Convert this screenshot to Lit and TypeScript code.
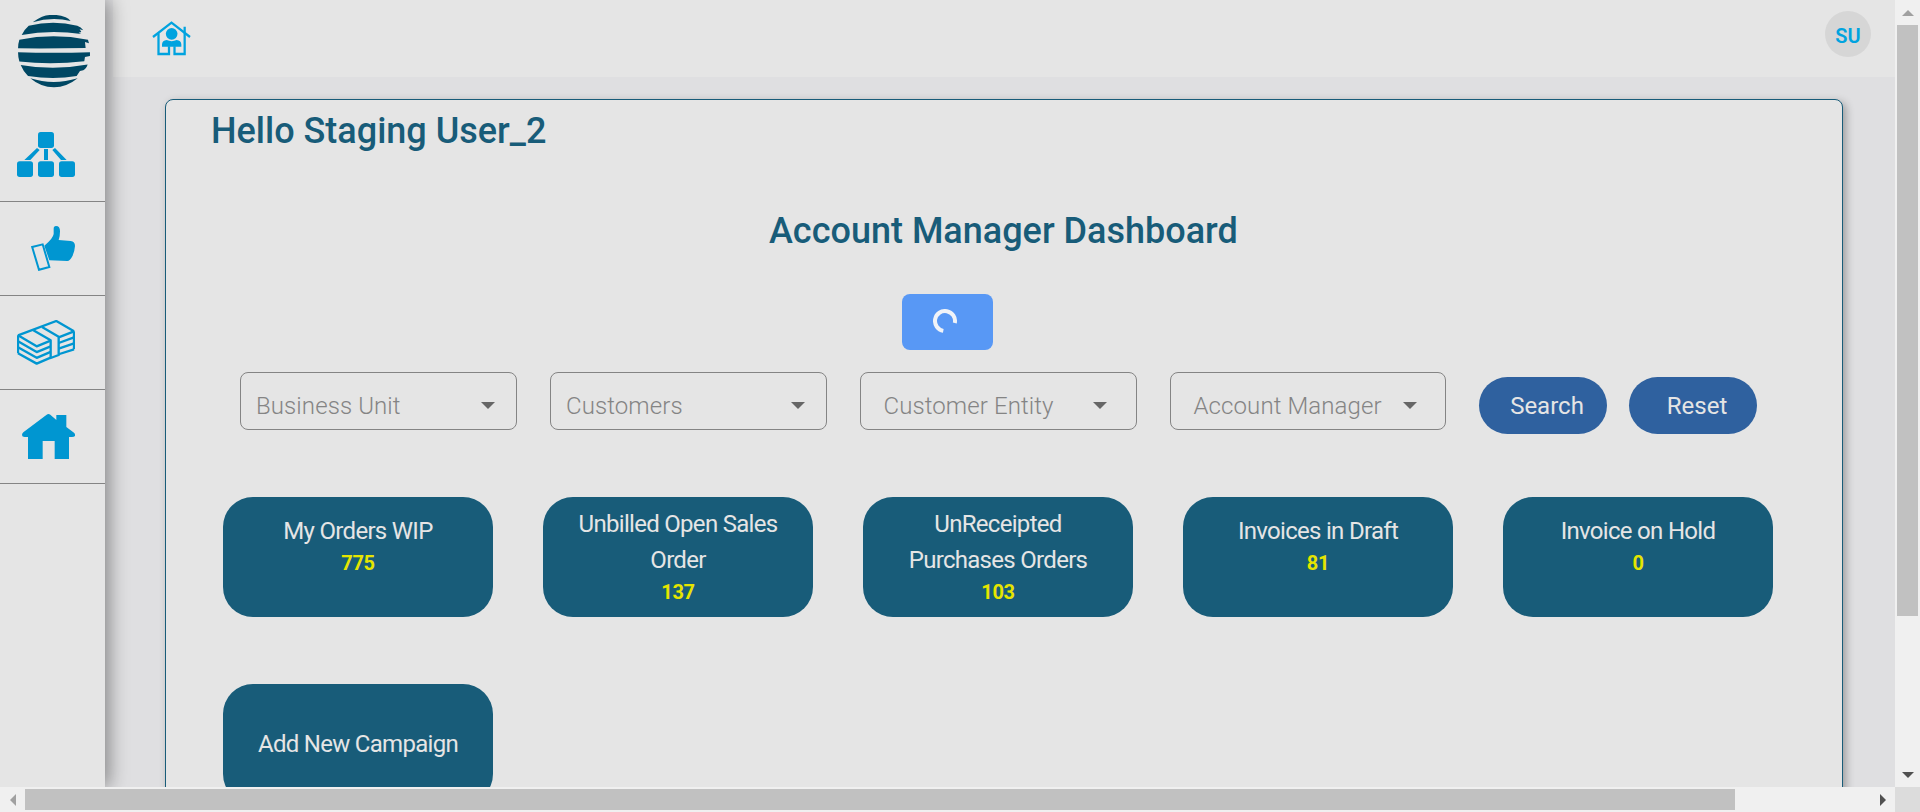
import { LitElement, html, css, svg } from "lit";
import { customElement } from "lit/decorators.js";

const logo = html`<svg class="logo" viewBox="54 44 216 218">
  <path d="M98 66Q110 56 126 49Q162 37 197 51Q206 55 212 62Q155 48 98 66Z" />
  <path d="M65 104Q72 88 86 76Q160 58 232 76Q243 80 250 90L239 87L244 95L236 97L244 101Q150 88 65 104Z" />
  <path d="M58 118Q160 98 264 118L267 129L255 125L257 143Q150 145 54 144Q54 130 58 118Z" />
  <path d="M54 156Q160 159 270 156L270 167L255 170L253 183Q155 194 58 184Q54 170 54 156Z" />
  <path d="M62 194Q160 212 263 193Q259 206 250 210L240 212L230 227Q160 240 84 227Q69 212 62 194Z" />
  <path d="M91 234Q160 256 233 234Q200 261 162 261Q122 261 91 234Z" />
</svg>`;

const userHome = html`<svg class="user-home" viewBox="456 64 117 105">
  <g fill="none" stroke="#00a3df" stroke-width="6.800">
    <path d="M459 112L514.500 69L570 112" />
    <path d="M475.500 101V163H507V140M523.500 140V163H554V81" />
  </g>
  <circle cx="515" cy="102.500" r="17.500" fill="#00a3df" />
  <path d="M486 141V134Q487 122 500 121Q515 128 530 121Q543 122 544 134V141Z" fill="#00a3df" />
</svg>`;

const offsets = [0, 18, 36, 54];

const navIcons = [
  html`<svg class="icon" viewBox="0 0 174 135">
    <rect x="63" y="0" width="48" height="48" rx="8" />
    <rect x="0" y="88" width="48" height="47" rx="8" />
    <rect x="63" y="88" width="48" height="47" rx="8" />
    <rect x="126" y="88" width="48" height="47" rx="8" />
    <path d="M60 48L68 54L40 84H22ZM114 48L106 54L132 84H149ZM81 51H93V84H81Z" />
  </svg>`,
  html`<svg class="icon" viewBox="51 108 174 135">
    <path d="M96.500 171L128 163L148 231L117 239.500Z" fill="none" stroke="#0096d1" stroke-width="6" />
    <path d="M133 167Q159 146 161 132V116Q161 108 168 108Q180 108 180 124Q180 140 176 150L212 153Q225 154 225 168Q224 184 217 199Q210 213 202 213L148 211Z" />
  </svg>`,
  html`<svg class="icon" viewBox="51 390 174 135">
    <g fill="none" stroke="#0096d1" stroke-width="7" stroke-linejoin="round">
      ${offsets.map(
        (d) => svg`<path d="M54 ${436 + d}L110 ${469 + d * 0.96}L152 ${452 + d * 0.94}M176 ${442 + d * 0.94}L222 ${424 + d}" />`
      )}
      <path d="M54 436L169 393L222 424M54 436V490M222 424V478" />
      <path d="M100 421L152 451V504L176 495V440L126 411" />
    </g>
  </svg>`,
  html`<svg class="icon" viewBox="51 672 174 135">
    <path d="M66 735Q66 730 70 727L140 674Q145 670 151 674L169 690V675H199V711L222 728Q226 732 225 738Q222 741 216 741H207V807H164V753H128V807H84V741H74Q66 741 66 735Z" />
  </svg>`,
];

const filters = [
  { label: "Business Unit", inset: false },
  { label: "Customers", inset: false },
  { label: "Customer Entity", inset: true },
  { label: "Account Manager", inset: true },
];

const cards = [
  { lines: ["My Orders WIP"], value: "775" },
  { lines: ["Unbilled Open Sales", "Order"], value: "137" },
  { lines: ["UnReceipted", "Purchases Orders"], value: "103" },
  { lines: ["Invoices in Draft"], value: "81" },
  { lines: ["Invoice on Hold"], value: "0" },
];

@customElement("app-root")
export class AppRoot extends LitElement {
  static styles = css`
    :host {
      display: grid;
      grid-template-columns: 1895px 25px;
      grid-template-rows: 787px 25px;
      width: 1920px;
      height: 812px;
      overflow: hidden;
      font-family: Roboto, "Liberation Sans", sans-serif;
    }
    * { box-sizing: border-box; }
    .page {
      display: flex;
      overflow: hidden;
      background: #dfdfe1;
    }
    .sidebar {
      position: relative;
      z-index: 1;
      flex: none;
      width: 105px;
      background: #e5e5e5;
      box-shadow: 4px 0 18px rgba(0, 0, 0, 0.4);
    }
    .brand { height: 108px; padding: 15px 0 0 18px; }
    svg { display: block; }
    .logo { width: 72px; height: 72.6px; fill: #004763; }
    .nav {
      height: 94px;
      padding: 24px 0 0 17px;
      border-bottom: 1px solid #848484;
    }
    .icon { width: 58px; height: 45px; fill: #0096d1; }
    .content { flex: 1; }
    .header {
      display: flex;
      justify-content: space-between;
      height: 77px;
      margin-left: 8px;
      padding: 11px 24px 0 39px;
      background: #e5e5e5;
    }
    .user-home { width: 39px; height: 35px; margin-top: 10.3px; }
    .avatar {
      width: 46px;
      height: 46px;
      border-radius: 50%;
      background: #d6d6d6;
      color: #00a3df;
      font-size: 20px;
      line-height: 51px;
      font-weight: 600;
      text-align: center;
    }
    .panel {
      width: 1678px;
      height: 900px;
      margin: 22px 0 0 60px;
      border: 1px solid #185c79;
      border-radius: 8px;
      background: #e5e5e5;
      box-shadow: 3px 3px 9px rgba(0, 0, 0, 0.3);
    }
    .greeting, .title {
      margin: 0;
      color: #185c79;
      font-size: 36px;
      line-height: 42px;
      font-weight: 500;
      white-space: nowrap;
    }
    .greeting { padding: 10px 0 0 45px; }
    .title { padding: 58px 0 0 603px; }
    .loading {
      display: flex;
      width: 91px;
      height: 56px;
      margin: 42px 0 0 736px;
      padding: 15px 0 0 31px;
      border-radius: 8px;
      background: #5898f5;
    }
    .filters { display: flex; margin: 22px 0 0 74px; }
    .select {
      display: flex;
      justify-content: space-between;
      align-items: center;
      width: 277px;
      height: 58px;
      margin-right: 33px;
      padding: 9px 21px 0 15px;
      border: 1px solid #848484;
      border-radius: 8px;
      color: #848484;
      font-size: 24px;
      font-weight: 300;
      letter-spacing: 0.1px;
      white-space: nowrap;
    }
    .select.inset { padding: 9px 29px 0 22.5px; }
    .select.last { width: 276px; padding-right: 28px; }
    .arrow { width: 14px; height: 7px; margin-bottom: 1px; fill: #666; }
    .button {
      width: 128px;
      height: 57px;
      margin: 5px 22px 0 0;
      border-radius: 28.5px;
      background: #2f619f;
      color: #e5e5e5;
      font-size: 24px;
      line-height: 59px;
      padding-left: 8px;
      text-align: center;
    }
    .cards {
      display: grid;
      grid-template-columns: repeat(5, 270px);
      gap: 67px 50px;
      margin: 63px 0 0 57px;
    }
    .card {
      display: flex;
      flex-direction: column;
      align-items: center;
      height: 120px;
      padding-top: 9px;
      border-radius: 30px;
      background: #185c79;
      color: #e5e5e5;
      font-size: 24px;
      line-height: 36px;
      letter-spacing: -0.7px;
      white-space: nowrap;
    }
    .card.short { padding-top: 16px; }
    .card.action { justify-content: center; padding: 0; }
    .value {
      color: #e5e500;
      font-size: 20px;
      line-height: 29px;
      font-weight: 700;
      letter-spacing: -0.3px;
    }
    .bar { display: flex; background: #f0f0f0; justify-content: space-between; }
    .vertical { flex-direction: column; padding: 0 2px; }
    .horizontal { padding: 2px 0; }
    .step { display: grid; place-items: center; width: 25px; height: 21px; }
    .vertical .step { width: 21px; height: 25px; }
    .v-thumb { height: 591px; margin-bottom: auto; background: #c1c1c1; }
    .h-thumb { width: 1710px; margin-right: auto; background: #c1c1c1; }
    .corner { background: #dcdcdc; }
  `;

  render() {
    return html`
      <div class="page">
        <nav class="sidebar">
          <div class="brand">${logo}</div>
          ${navIcons.map((icon) => html`<div class="nav">${icon}</div>`)}
        </nav>
        <div class="content">
          <header class="header">
            ${userHome}
            <div class="avatar">SU</div>
          </header>
          <main class="panel">
            <h1 class="greeting">Hello Staging User_2</h1>
            <h2 class="title">Account Manager Dashboard</h2>
            <div class="loading">
              <svg width="24" height="24" viewBox="0 0 24 24" fill="none">
                <path d="M21.800 14A10 10 0 1 0 10.300 21.860" stroke="#f0f3f8" stroke-width="4" />
              </svg>
            </div>
            <div class="filters">
              ${filters.map(
                (f, i) => html`<div class="select ${f.inset ? "inset" : ""} ${i === filters.length - 1 ? "last" : ""}">
                  <span>${f.label}</span>
                  <svg class="arrow" viewBox="0 0 14 7"><path d="M0 0H14L7 7Z" /></svg>
                </div>`
              )}
              <div class="button">Search</div>
              <div class="button">Reset</div>
            </div>
            <section class="cards">
              ${cards.map(
                (c) => html`<div class="card ${c.lines.length === 1 ? "short" : ""}">
                  ${c.lines.map((line) => html`<span>${line}</span>`)}
                  <span class="value">${c.value}</span>
                </div>`
              )}
              <div class="card action"><span>Add New Campaign</span></div>
            </section>
          </main>
        </div>
      </div>
      <div class="bar vertical">
        <div class="step"><svg width="12" height="6" viewBox="0 0 12 6"><path d="M0 6L6 0L12 6Z" fill="#a0a0a0" /></svg></div>
        <div class="v-thumb"></div>
        <div class="step"><svg width="12" height="6" viewBox="0 0 12 6"><path d="M0 0H12L6 6Z" fill="#505050" /></svg></div>
      </div>
      <div class="bar horizontal">
        <div class="step"><svg width="6" height="12" viewBox="0 0 6 12"><path d="M6 0V12L0 6Z" fill="#a0a0a0" /></svg></div>
        <div class="h-thumb"></div>
        <div class="step"><svg width="6" height="12" viewBox="0 0 6 12"><path d="M0 0V12L6 6Z" fill="#505050" /></svg></div>
      </div>
      <div class="corner"></div>
    `;
  }
}
